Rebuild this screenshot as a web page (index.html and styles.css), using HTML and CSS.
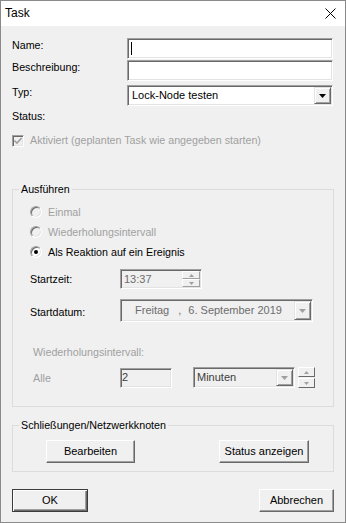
FILE: index.html
```html
<!DOCTYPE html>
<html lang="de">
<head>
    <meta charset="UTF-8">
    <title>Task</title>
    <link rel="stylesheet" href="styles.css">
</head>
<body>
<div class="window">
    <!--================ Titelleiste ================-->
    <div class="titlebar">
        <span class="title">Task</span>
        <svg class="close" width="11" height="11" viewBox="0 0 11 11"><path d="M0.5 0.5L10.5 10.5M10.5 0.5L0.5 10.5" stroke="#000" stroke-width="1" fill="none"/></svg>
    </div>

    <div class="dialog">
        <div class="form-row">
            <label>Name:</label>
            <div class="edit"><span class="caret"></span></div>
        </div>
        <div class="form-row row-desc">
            <label>Beschreibung:</label>
            <div class="edit"></div>
        </div>
        <div class="form-row row-type">
            <label>Typ:</label>
            <div class="edit combo">
                <span class="combo-text">Lock-Node testen</span>
                <span class="drop-btn"><svg width="7" height="4" viewBox="0 0 7 4"><path d="M0 0H7L3.5 4Z" fill="#000"/></svg></span>
            </div>
        </div>
        <div class="status">Status:</div>
        <div class="check-row disabled">
            <span class="checkbox"><svg width="8" height="8" viewBox="0 0 8 8"><path d="M0.5 3.5L3 6L7.5 1" stroke="#a0a0a0" stroke-width="1.6" fill="none"/></svg></span>
            <span>Aktiviert (geplanten Task wie angegeben starten)</span>
        </div>

        <!--================ Ausführen ================-->
        <fieldset class="group group-exec">
            <legend>Ausführen</legend>
            <div class="exec-body">
                <div class="radio-row disabled"><span class="radio"></span>Einmal</div>
                <div class="radio-row disabled"><span class="radio"></span>Wiederholungsintervall</div>
                <div class="radio-row"><span class="radio radio-on"></span>Als Reaktion auf ein Ereignis</div>

                <div class="line-row time-row">
                    <span class="line-label">Startzeit:</span>
                    <div class="edit off time-box">
                        <span class="box-text">13:37</span>
                        <span class="spin">
                            <span class="spin-btn"><svg width="5" height="3" viewBox="0 0 5 3"><path d="M0 3H5L2.5 0Z" fill="#a0a0a0"/></svg></span>
                            <span class="spin-btn"><svg width="5" height="3" viewBox="0 0 5 3"><path d="M0 0H5L2.5 3Z" fill="#a0a0a0"/></svg></span>
                        </span>
                    </div>
                </div>

                <div class="line-row date-row">
                    <span class="line-label date-label">Startdatum:</span>
                    <div class="edit off date-box">
                        <span class="box-text date-text"><span class="weekday">Freitag</span><span class="comma">,</span>6. September 2019</span>
                        <span class="drop-btn"><svg width="7" height="4" viewBox="0 0 7 4"><path d="M0 0H7L3.5 4Z" fill="#a0a0a0"/></svg></span>
                    </div>
                </div>

                <div class="interval-label disabled">Wiederholungsintervall:</div>
                <div class="line-row every-row">
                    <span class="line-label disabled every-label">Alle</span>
                    <div class="edit off count-box"><span class="box-text dark">2</span></div>
                    <div class="edit off unit-box">
                        <span class="box-text dark">Minuten</span>
                        <span class="drop-btn"><svg width="7" height="4" viewBox="0 0 7 4"><path d="M0 0H7L3.5 4Z" fill="#a0a0a0"/></svg></span>
                    </div>
                    <span class="spin spin-free">
                        <span class="spin-btn"><svg width="5" height="3" viewBox="0 0 5 3"><path d="M0 3H5L2.5 0Z" fill="#a0a0a0"/></svg></span>
                        <span class="spin-btn"><svg width="5" height="3" viewBox="0 0 5 3"><path d="M0 0H5L2.5 3Z" fill="#a0a0a0"/></svg></span>
                    </span>
                </div>
            </div>
        </fieldset>

        <!--================ Schließungen ================-->
        <fieldset class="group group-nodes">
            <legend>Schließungen/Netzwerkknoten</legend>
            <div class="nodes-body">
                <button class="btn btn-edit">Bearbeiten</button>
                <button class="btn btn-status">Status anzeigen</button>
            </div>
        </fieldset>

        <div class="footer">
            <button class="btn btn-ok">OK</button>
            <button class="btn btn-cancel">Abbrechen</button>
        </div>
    </div>
</div>
</body>
</html>
```

FILE: styles.css
```css
* { box-sizing: border-box; }
body { margin: 0; font: 10.7px/13px "Liberation Sans", Arial, sans-serif; color: #000; background: #fff; }

.window { width: 346px; height: 523px; border: 1px solid #8a8a8a; background: #f0f0f0; display: flex; flex-direction: column; }

/*======== Titelleiste ========*/
.titlebar { height: 25px; background: #fff; display: flex; align-items: center; justify-content: space-between; padding: 0 9px 0 4px; }
.title { font-size: 12px; }
.close { display: block; }

.dialog { padding: 12px 11px 0 11px; }
.disabled { color: #a0a0a0; }

/*======== Eingabefelder, eingesenkt ========*/
.edit { height: 21px; width: 206px; background: #fff; border: 1px solid; border-color: #a0a0a0 #fff #fff #a0a0a0; box-shadow: inset 1px 1px #696969, inset -1px -1px #e3e3e3; display: flex; align-items: center; }
.edit.off { background: #f0f0f0; }
.caret { width: 1px; height: 13px; background: #000; margin-left: 3px; }

.form-row { display: flex; align-items: flex-start; }
.form-row label { width: 115px; padding-top: 1px; }
.row-desc { margin-top: 1px; }
.row-type { margin-top: 4px; }

.combo { justify-content: space-between; padding: 1px; }
.combo-text { padding-left: 3px; font-size: 11px; }
.drop-btn { flex: none; width: 17px; height: 17px; display: flex; align-items: center; justify-content: center; background: #f0f0f0; border: 1px solid; border-color: #e3e3e3 #696969 #696969 #e3e3e3; box-shadow: inset 1px 1px #fff, inset -1px -1px #a0a0a0; }

.status { margin-top: 4px; }
.check-row { margin-top: 11px; display: flex; align-items: center; gap: 6px; }
.checkbox { width: 12px; height: 12px; border: 1px solid; border-color: #a0a0a0 #fff #fff #a0a0a0; box-shadow: inset 1px 1px #696969, inset -1px -1px #e3e3e3; display: flex; align-items: center; justify-content: center; background: #f0f0f0; }
.checkbox svg { display: block; }

/*======== Gruppenrahmen ========*/
.group { margin: 36px 0 0; padding: 0; border: 1px solid #dcdcdc; min-width: 0; }
.group legend { margin-left: 6px; padding: 0 2px; line-height: 13px; }

.exec-body { padding: 6px 0 18px 17px; }
.radio-row { height: 20px; display: flex; align-items: center; gap: 6px; }
.radio { width: 12px; height: 12px; border-radius: 50%; border: 1px solid; border-color: #a0a0a0 #fff #fff #a0a0a0; box-shadow: inset 1px 1px #696969, inset -1px -1px #e3e3e3; background: #f0f0f0; position: relative; }
.radio-on { background: #fff; }
.radio-on::after { content: ""; position: absolute; left: 3px; top: 3px; width: 4px; height: 4px; border-radius: 50%; background: #000; }

.line-row { display: flex; align-items: center; }
.line-label { width: 90px; flex: none; }
.time-row { margin-top: 7px; }
.time-box { width: 82px; height: 20px; justify-content: space-between; padding: 1px; }
.box-text { padding-left: 2px; color: #6d6d6d; font-size: 11px; white-space: nowrap; }
.box-text.dark { color: #3c3c3c; }

.spin { display: flex; flex-direction: column; width: 18px; height: 16px; flex: none; }
.spin-btn { flex: 1; display: flex; align-items: center; justify-content: center; background: #f0f0f0; border: 1px solid; border-color: #fff #a0a0a0 #a0a0a0 #fff; }
.spin-btn svg { display: block; }

.date-row { margin-top: 10px; }
.date-label { padding-top: 4px; }
.date-box { width: 193px; height: 23px; justify-content: space-between; padding: 1px; }
.date-text { padding-left: 13px; }
.weekday { margin-right: 9px; }
.comma { margin-right: 7px; }
.date-box .drop-btn { height: 19px; }

.interval-label { margin-top: 24px; padding-left: 3px; }
.every-row { margin-top: 8px; }
.every-label { padding-left: 3px; padding-top: 2px; }
.count-box { width: 52px; height: 20px; }
.count-box .box-text { padding-left: 1px; }
.unit-box { width: 102px; height: 21px; margin-left: 21px; justify-content: space-between; padding: 1px; }
.unit-box .drop-btn { height: 17px; }
.spin-free { margin-left: 3px; width: 17px; height: 21px; gap: 1px; }
.spin-free .spin-btn { border-color: #fff #696969 #696969 #fff; }

/*======== Knöpfe ========*/
.group-nodes { margin-top: 12px; }
.nodes-body { display: flex; justify-content: space-between; padding: 8px 24px 8px 33px; }

.btn { font: inherit; font-size: 11px; color: #000; height: 23px; padding: 0; background: #f0f0f0; border: 1px solid; border-color: #fff #696969 #696969 #fff; box-shadow: inset -1px -1px #a0a0a0, inset 1px 1px #f0f0f0; }
.btn-edit { width: 89px; }
.btn-status { width: 90px; }

.footer { margin-top: 17px; display: flex; justify-content: space-between; }
.btn-ok { width: 76px; border-color: #3c3c3c; box-shadow: inset 1px 1px #fff, inset -1px -1px #696969, inset -2px -2px #a0a0a0; }
.btn-cancel { width: 75px; }
```
